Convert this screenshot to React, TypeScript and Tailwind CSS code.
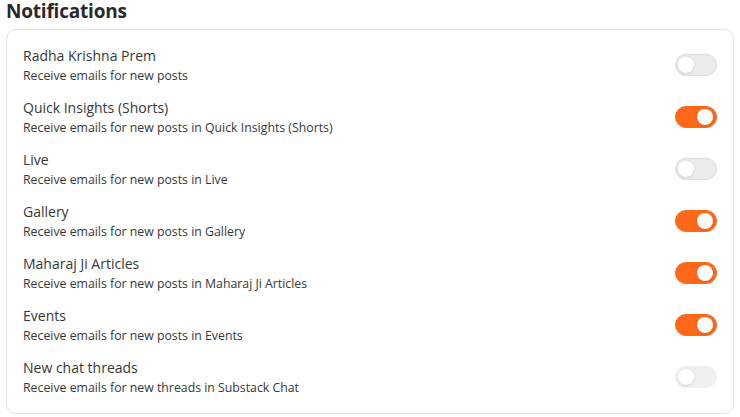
import { useState } from "react";

const rows = [
  { title: "Radha Krishna Prem", desc: "Receive emails for new posts", on: false },
  { title: "Quick Insights (Shorts)", desc: "Receive emails for new posts in Quick Insights (Shorts)", on: true },
  { title: "Live", desc: "Receive emails for new posts in Live", on: false },
  { title: "Gallery", desc: "Receive emails for new posts in Gallery", on: true },
  { title: "Maharaj Ji Articles", desc: "Receive emails for new posts in Maharaj Ji Articles", on: true },
  { title: "Events", desc: "Receive emails for new posts in Events", on: true },
  { title: "New chat threads", desc: "Receive emails for new threads in Substack Chat", on: false, disabled: true },
];

function Toggle({ on, disabled, onClick }: { on: boolean; disabled?: boolean; onClick: () => void }) {
  return (
    <button
      onClick={onClick}
      disabled={disabled}
      className={
        "relative w-[42px] h-[22px] rounded-full border shrink-0 transition " +
        (on
          ? "bg-[#ff6719] border-[#ff6719]"
          : disabled
          ? "bg-[#f0f0f0] border-[#f0f0f0]"
          : "bg-[#ebebeb] border-[#dcdcdc]")
      }
    >
      <span
        className={
          "absolute top-[2px] w-4 h-4 rounded-full bg-white shadow-sm transition-all " +
          (on ? "left-[21px]" : "left-[2px]")
        }
      />
    </button>
  );
}

export default function App() {
  const [state, setState] = useState(rows.map((r) => r.on));

  return (
    <div className="w-[740px] h-[417px] bg-white px-[6px] font-['Open_Sans',sans-serif]">
      <h1 className="text-[19px] leading-[22px] tracking-[-0.2px] font-bold text-[#292929]">Notifications</h1>

      <div className="mt-[7px] border border-[#e2e2e2] rounded-[10px] px-4 pt-[16px] pb-[17px] flex flex-col gap-[14px]">
        {rows.map((r, i) => (
          <div key={r.title} className="flex items-center justify-between">
            <div>
              <p className="text-[14px] leading-[20px] text-[#363737]">{r.title}</p>
              <p className="text-[12.3px] leading-[16px] mt-[2px] text-[#363737]">{r.desc}</p>
            </div>
            <Toggle
              on={state[i]}
              disabled={r.disabled}
              onClick={() => setState(state.map((v, j) => (j === i ? !v : v)))}
            />
          </div>
        ))}
      </div>
    </div>
  );
}
